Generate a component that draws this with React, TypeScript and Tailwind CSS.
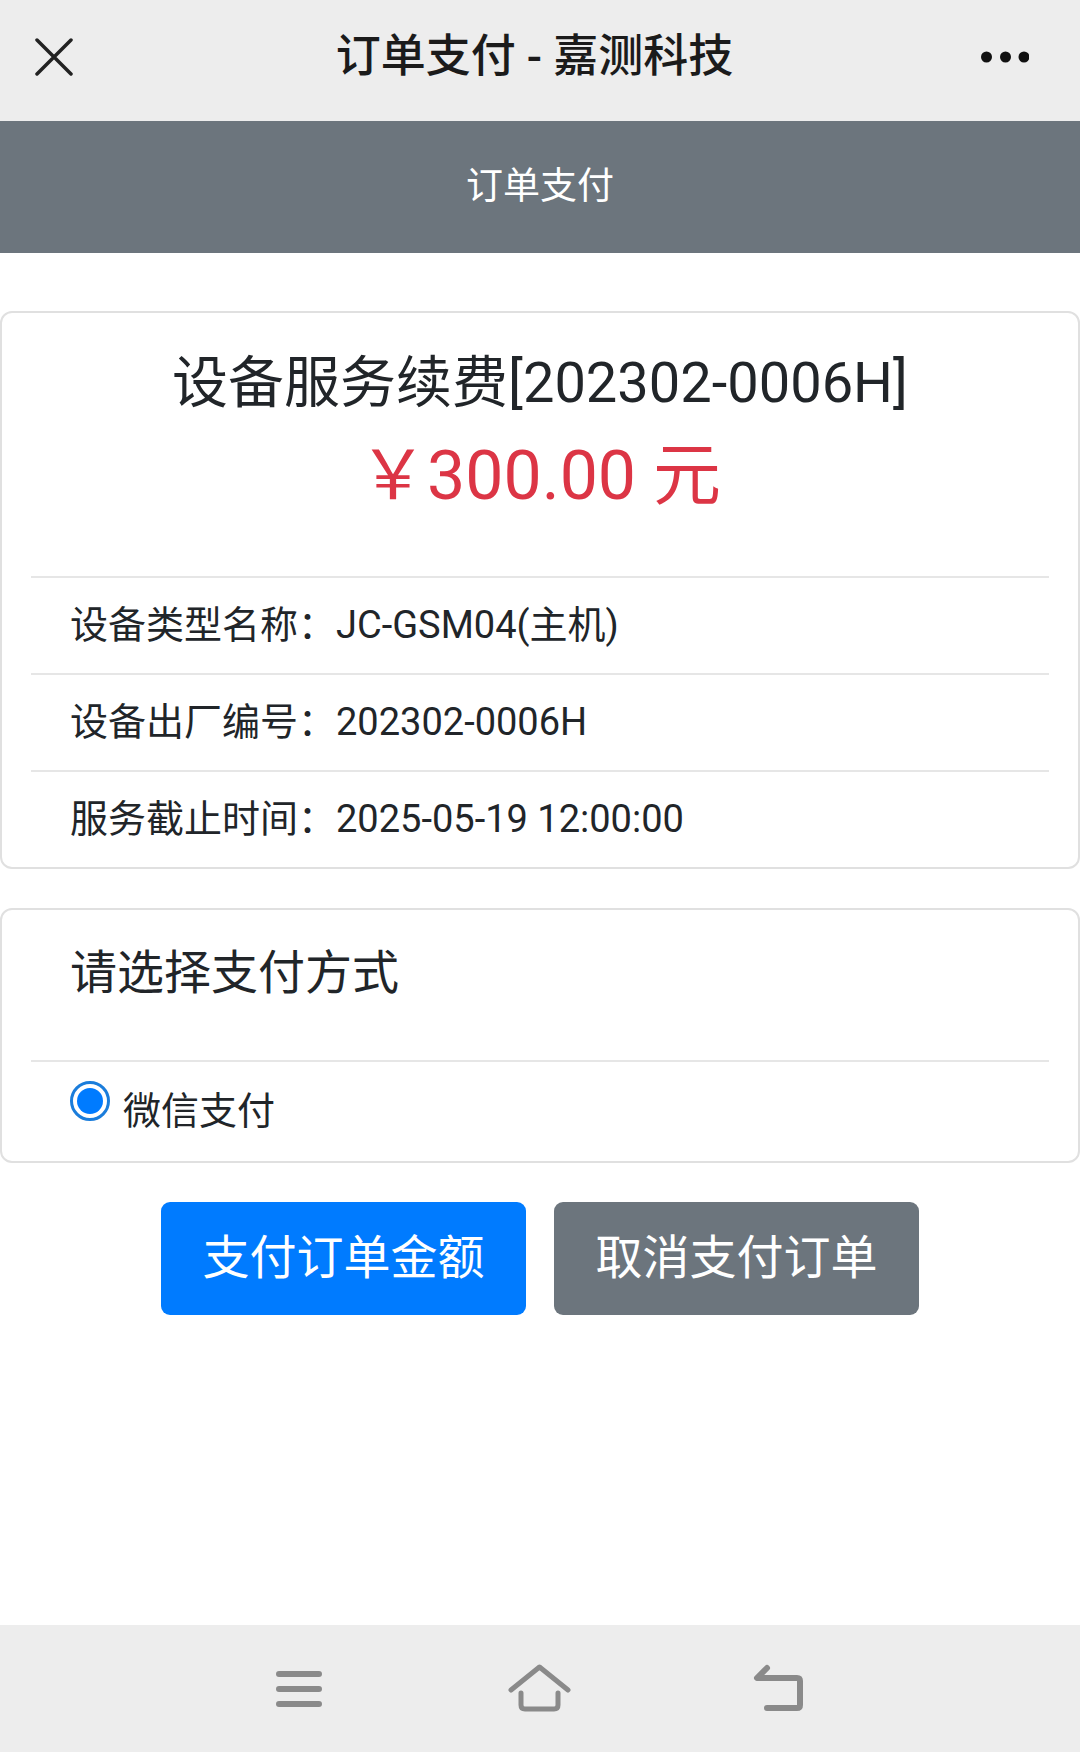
import React from 'react';

const font = { fontFamily: 'Roboto, "Noto Sans CJK SC", sans-serif' };

function InfoRow({ label, value }: { label: string; value: string }) {
    return (
        <div className="border-t-2 border-[#e6e6e6] h-[97px] flex items-center px-[39px] text-[38px] text-[#212529]">
            <span>{label}</span>
            <span>{value}</span>
        </div>
    );
}

function App() {
    return (
        <div className="w-[1080px] h-[1752px] flex flex-col bg-white" style={font}>
            {/* wechat top bar */}
            <div className="h-[121px] shrink-0 bg-[#ededed] grid grid-cols-[120px_1fr_120px] items-center pb-[8px]">
                <div className="pl-[35px] flex items-center">
                    <svg width="38" height="38" viewBox="0 0 38 38">
                        <path d="M2 2 L36 36 M36 2 L2 36" stroke="#222" strokeWidth="3.5" strokeLinecap="round" />
                    </svg>
                </div>
                <div className="text-center text-[45px] font-medium text-[#1b1b1b] pr-[11px] leading-none">
                    订单支付 - 嘉测科技
                </div>
                <div className="flex justify-end pr-[51px]">
                    <svg width="48" height="12" viewBox="0 0 48 12">
                        <circle cx="5.5" cy="6" r="5.5" fill="#111" />
                        <circle cx="24.5" cy="6" r="5.5" fill="#111" />
                        <circle cx="43" cy="6" r="5.5" fill="#111" />
                    </svg>
                </div>
            </div>

            {/* page header */}
            <div className="h-[132px] shrink-0 bg-[#6c757d] flex items-center justify-center text-white text-[37px]">
                订单支付
            </div>

            {/* order card */}
            <div className="mt-[58px] border-2 border-[#e0e0e0] rounded-[12px] bg-white">
                <div className="pt-[37px] pb-[60px] text-center">
                    <div className="text-[56px] leading-[66px] text-[#212529]">设备服务续费[202302-0006H]</div>
                    <div className="mt-[20px] text-[68px] leading-[80px] text-[#dc3545]">￥300.00 元</div>
                </div>
                <div className="mx-[29px]">
                    <InfoRow label="设备类型名称：" value="JC-GSM04(主机)" />
                    <InfoRow label="设备出厂编号：" value="202302-0006H" />
                    <InfoRow label="服务截止时间：" value="2025-05-19 12:00:00" />
                </div>
            </div>

            {/* payment method */}
            <div className="mt-[39px] border-2 border-[#e0e0e0] rounded-[12px] bg-white">
                <div className="pt-[35px] pb-[59px] px-[68px] text-[47px] leading-[56px] text-[#212529]">
                    请选择支付方式
                </div>
                <div className="mx-[29px] border-t-2 border-[#e6e6e6] h-[101px] flex items-start px-[39px]">
                    <span className="mt-[19px] w-[40px] h-[40px] rounded-full border-[3px] border-[#1b7ddb] flex items-center justify-center shrink-0">
                        <span className="w-[26px] h-[26px] rounded-full bg-[#007bff]" />
                    </span>
                    <span className="ml-[13px] mt-[26px] text-[38px] leading-[46px] text-[#212529]">微信支付</span>
                </div>
            </div>

            {/* actions */}
            <div className="mt-[39px] flex justify-center gap-[28px]">
                <button className="w-[365px] h-[113px] rounded-[9px] bg-[#007bff] text-white text-[47px]">
                    支付订单金额
                </button>
                <button className="w-[365px] h-[113px] rounded-[9px] bg-[#6c757d] text-white text-[47px]">
                    取消支付订单
                </button>
            </div>

            {/* android nav */}
            <div className="mt-auto h-[127px] shrink-0 bg-[#ededed] flex items-center pl-[276px]">
                <svg width="46" height="36" viewBox="0 0 46 36">
                    <path d="M3 3 H43 M3 18 H43 M3 33 H43" stroke="#8a8a8a" strokeWidth="6" strokeLinecap="round" />
                </svg>
                <svg className="ml-[186px]" width="63" height="49" viewBox="0 0 63 49">
                    <path d="M3 26 L31.5 3 L60 26" fill="none" stroke="#8a8a8a" strokeWidth="5" strokeLinecap="round" strokeLinejoin="round" />
                    <path d="M13 29 V41 Q13 45 17 45 H46 Q50 45 50 41 V29" fill="none" stroke="#8a8a8a" strokeWidth="5" strokeLinecap="round" />
                </svg>
                <svg className="ml-[181px]" width="54" height="50" viewBox="0 0 54 50">
                    <path d="M15 4 L5 14 H45 Q48 14 48 17 V41 Q48 44 45 44 H15" fill="none" stroke="#8a8a8a" strokeWidth="6" strokeLinecap="round" strokeLinejoin="round" />
                </svg>
            </div>
        </div>
    );
}

export default App;
